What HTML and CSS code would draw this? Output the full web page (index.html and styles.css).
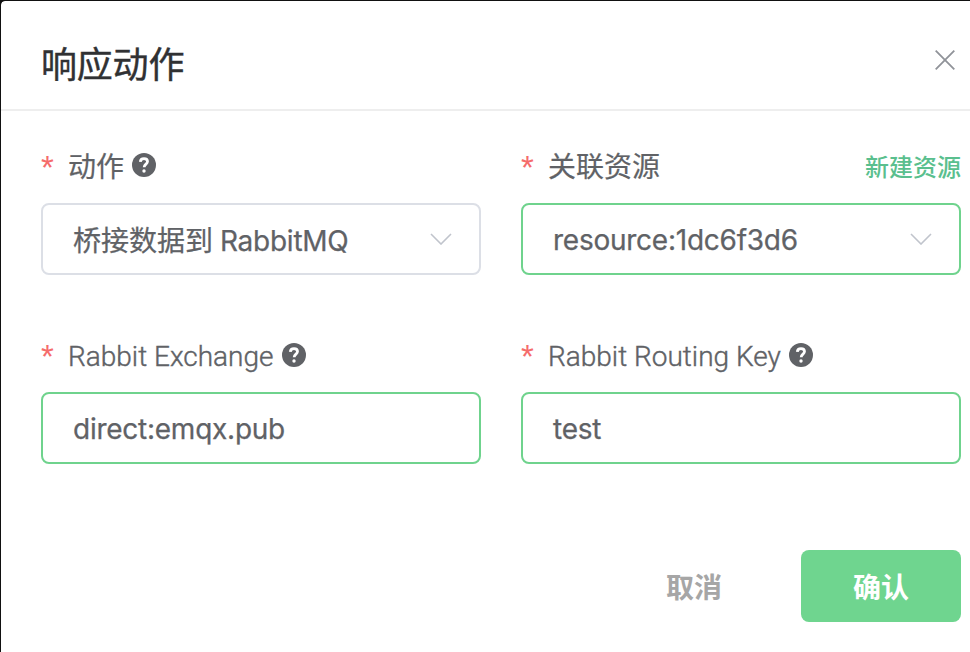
FILE: index.html
```html
<!DOCTYPE html>
<html lang="zh-CN">
<head>
<meta charset="utf-8">
<title>响应动作</title>
<link rel="stylesheet" href="styles.css">
</head>
<body>
<main class="dialog">
  <header class="header">
    <h1 class="title">响应动作</h1>
    <svg class="close" viewBox="0 0 20 20"><path d="M.7.7 19.3 19.3M19.3.7.7 19.3"/></svg>
  </header>
  <form class="form">
    <div class="field">
      <div class="label cjk"><span class="star">*</span><span class="name">动作</span><svg class="help" viewBox="0 0 24 24"><circle cx="12" cy="12" r="12"/><path d="M8.3 8.8C8.5 6.6 10 5.6 12 5.6c2.1 0 3.5 1.2 3.5 3 0 2.5-3.3 2.6-3.3 5.6"/><circle class="dot" cx="12" cy="18" r="1.7"/></svg></div>
      <div class="input plain"><span class="value mixed">桥接数据到 <span class="mq">RabbitMQ</span></span><svg class="arrow" viewBox="0 0 22 12"><path d="m1 1 10 10L21 1"/></svg></div>
    </div>
    <div class="field">
      <div class="label cjk"><span class="star">*</span><span class="name">关联资源</span><a class="create">新建资源</a></div>
      <div class="input"><span class="value latin">resource:1dc6f3d6</span><svg class="arrow" viewBox="0 0 22 12"><path d="m1 1 10 10L21 1"/></svg></div>
    </div>
    <div class="field">
      <div class="label"><span class="star">*</span><span class="name light">Rabbit Exchange</span><svg class="help" viewBox="0 0 24 24"><circle cx="12" cy="12" r="12"/><path d="M8.3 8.8C8.5 6.6 10 5.6 12 5.6c2.1 0 3.5 1.2 3.5 3 0 2.5-3.3 2.6-3.3 5.6"/><circle class="dot" cx="12" cy="18" r="1.7"/></svg></div>
      <div class="input"><span class="value latin">direct:emqx.pub</span></div>
    </div>
    <div class="field">
      <div class="label"><span class="star">*</span><span class="name light">Rabbit Routing Key</span><svg class="help" viewBox="0 0 24 24"><circle cx="12" cy="12" r="12"/><path d="M8.3 8.8C8.5 6.6 10 5.6 12 5.6c2.1 0 3.5 1.2 3.5 3 0 2.5-3.3 2.6-3.3 5.6"/><circle class="dot" cx="12" cy="18" r="1.7"/></svg></div>
      <div class="input"><span class="value latin">test</span></div>
    </div>
  </form>
  <footer class="footer"><button class="btn cancel">取消</button><button class="btn confirm">确认</button></footer>
</main>
</body>
</html>
```
FILE: styles.css
```css
* { box-sizing: border-box; }
body { margin: 0; background: #111; color: #606266; font-family: Roboto, "Noto Sans CJK SC", sans-serif; }
.dialog { width: 970px; height: 652px; background: #fff; background-clip: padding-box; border-top: 1px solid #111; border-left: 1px solid #111; border-top-left-radius: 5px; overflow: hidden; }
.header { height: 110px; border-bottom: 2px solid #eee; display: flex; align-items: center; justify-content: space-between; padding: 21px 15px 0 40px; }
.title { margin: 0; color: #303133; font-size: 36px; line-height: 50px; font-weight: 400; letter-spacing: -.2px; -webkit-text-stroke: .4px #303133; }
.close { width: 20px; height: 20px; margin-top: -12px; fill: none; stroke: #909399; stroke-width: 1.8; }
.form { display: grid; grid-template-columns: 440px 440px; column-gap: 40px; row-gap: 57px; padding: 32px 0 0 40px; }
.field { height: 132px; }
.label { height: 60px; padding-bottom: 14px; display: flex; align-items: center; font-size: 28px; white-space: nowrap; }
.label.cjk { padding-bottom: 16px; }
.cjk .name { -webkit-text-stroke: .2px #606266; margin-top: -1px; }
.light { font-weight: 300; -webkit-text-stroke: .4px #606266; padding-top: 3px; }
.star { width: 27px; color: #f56c6c; font-family: "Liberation Sans", sans-serif; font-size: 33px; padding-top: 4px; }
.cjk .star { padding-top: 6px; }
.help { width: 24px; height: 24px; margin-left: 8px; fill: #606266; }
.help path { fill: none; stroke: #fff; stroke-width: 2.8; }
.help .dot { fill: #fff; }
.create { margin-left: auto; color: #5abf8e; font-size: 24px; font-weight: 500; }
.input { height: 72px; border: 2px solid #6fd38d; border-radius: 8px; padding: 0 27px 0 30px; display: flex; align-items: center; justify-content: space-between; font-size: 28px; }
.plain { border-color: #dcdfe6; }
.value { -webkit-text-stroke: .25px #606266; }
.latin, .mq { font-family: Inter, sans-serif; letter-spacing: -.25px; }
.latin { padding-top: 2px; }
.arrow { width: 22px; height: 12px; fill: none; stroke: #c0c4cc; stroke-width: 1.6; }
.footer { display: flex; justify-content: flex-end; padding: 86px 9px 0 0; }
.btn { width: 160px; height: 72px; padding: 0; border: 0; border-radius: 8px; font-family: inherit; font-size: 28px; font-weight: 700; }
.cancel { background: transparent; color: #a6a6a6; margin-right: 27px; }
.confirm { background: #6fd58f; color: #fff; }
```
